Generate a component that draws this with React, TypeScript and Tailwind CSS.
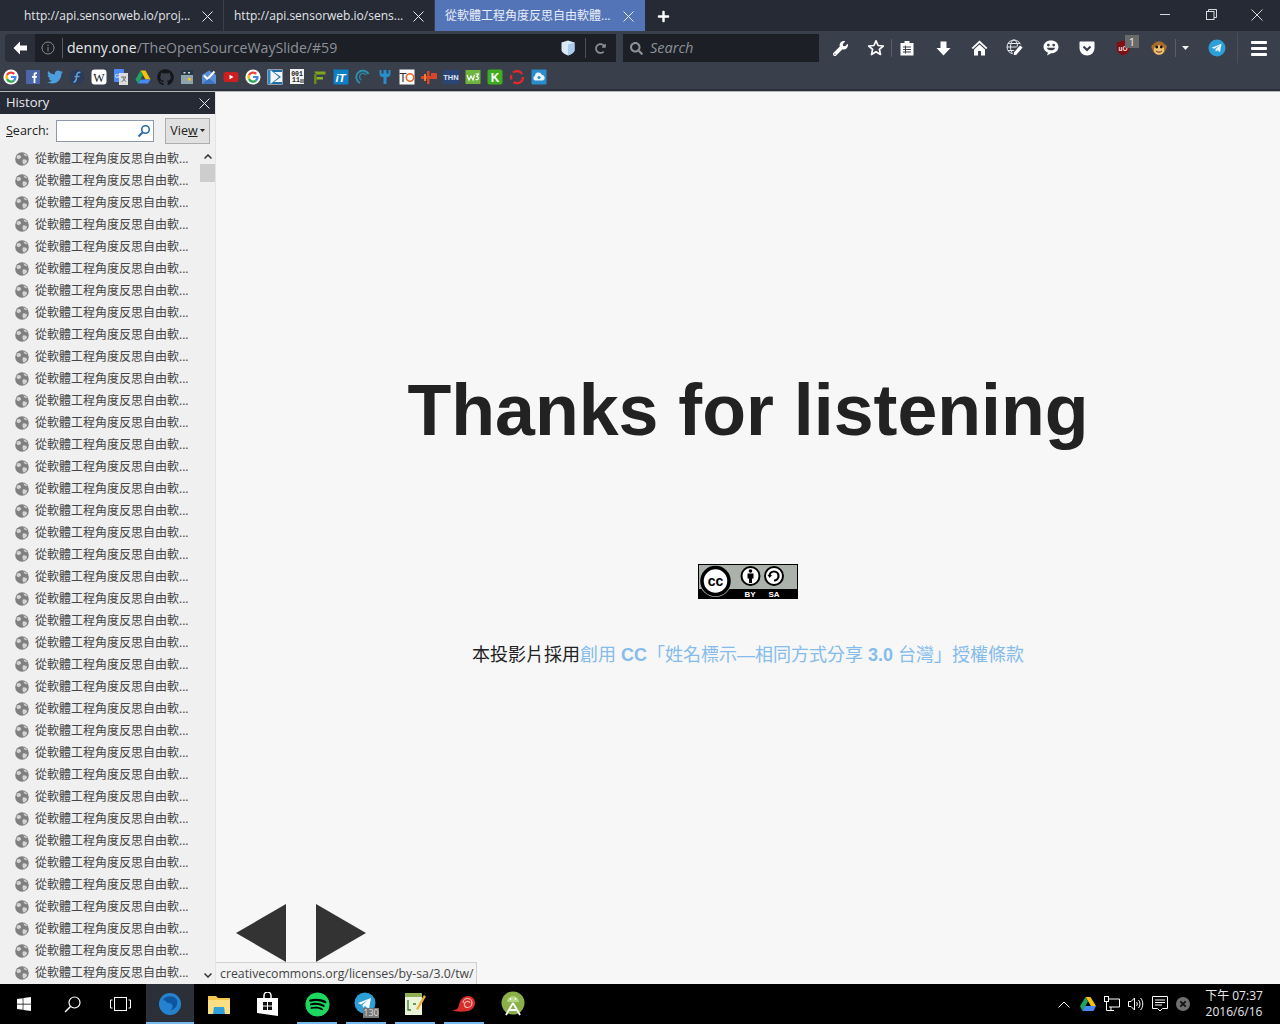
import type { ReactNode } from "react"
import {
  FaGithub,
  FaPlus,
  FaSearch,
  FaTwitter,
  FaWrench,
  FaRedoAlt,
  FaSpotify,
  FaWindows,
} from "react-icons/fa"

const sans = "font-['Open_Sans','Noto_Sans_CJK_TC',sans-serif]"

function GoogleG({ size = 16 }: { size?: number }) {
  return (
    <svg width={size} height={size} viewBox="0 0 16 16">
      <circle cx="8" cy="8" r="7.6" fill="#fff" />
      <path d="M3 5.4A5.6 5.6 0 0 1 12 4.1L10.4 5.7A3.4 3.4 0 0 0 5 6.7Z" fill="#ea4335" />
      <path d="M3 5.4L5 6.7A3.4 3.4 0 0 0 5 9.3L3 10.7A5.7 5.7 0 0 1 3 5.4Z" fill="#fbbc05" />
      <path d="M3 10.7L5 9.3A3.4 3.4 0 0 0 10 10.8L12 12.2A5.6 5.6 0 0 1 3 10.7Z" fill="#34a853" />
      <path d="M8 7H13.5C13.8 9 13.2 10.9 12 12.2L10 10.8C10.6 10.3 11 9.7 11.1 9H8Z" fill="#4285f4" />
    </svg>
  )
}

function Fav({ children }: { children: ReactNode }) {
  return <div className="w-[22px] h-[16px] flex items-center justify-center shrink-0">{children}</div>
}

const s16 = { width: 16, height: 16, viewBox: "0 0 16 16" }

function Bookmarks() {
  return (
    <div className="h-[25px] bg-[#3a3f4c] flex items-center pt-[1px]">
      <Fav><GoogleG /></Fav>
      <Fav><svg {...s16}><rect x="1" y="1" width="14" height="14" fill="#4a66a8" /><path d="M8.6 14V8.8H7V6.900H8.600V5.500C8.600 4 9.500 3.300 10.800 3.300H12V5H11.100C10.600 5 10.400 5.300 10.400 5.800V6.900H12L11.700 8.800H10.400V14Z" fill="#fff" /></svg></Fav>
      <Fav><FaTwitter size={16} color="#4b9fdc" /></Fav>
      <Fav><svg {...s16}><circle cx="8" cy="8" r="7.500" fill="#2d3a58" /><path d="M4.500 13C6.500 13 7 11.500 7.300 10L8 5.500C8.200 4 9 3 11.500 3.200" stroke="#5da3e0" strokeWidth="1.500" fill="none" /><path d="M5.500 7.500H10.500" stroke="#5da3e0" strokeWidth="1.300" /></svg></Fav>
      <Fav><svg {...s16}><rect x="0.500" y="0.500" width="15" height="15" rx="3" fill="#fff" /><text x="8" y="12.500" textAnchor="middle" fontSize="12" fontFamily="Liberation Serif" fill="#111">W</text></svg></Fav>
      <Fav><svg {...s16}><rect x="1" y="0" width="10" height="13" rx="1" fill="#4c8bf5" /><rect x="6" y="4" width="9" height="12" fill="#dcdcdc" /><text x="4" y="9" textAnchor="middle" fontSize="6" fill="#fff" fontFamily="Liberation Sans">G</text><path d="M8 8H13M10 8C10.400 11 12 12 13 12.500M12.500 8C12 11 10 12 8.500 12.500" stroke="#777" strokeWidth="1" fill="none" /></svg></Fav>
      <Fav><svg {...s16}><path d="M5.500 1.500H10.500L15.500 10.500H10.500Z" fill="#f4c20d" /><path d="M5.500 1.500L0.500 10.500L3 14.500L8 5.800Z" fill="#1ea362" /><path d="M3 14.500H13L15.500 10.500H5.500Z" fill="#4688f4" /></svg></Fav>
      <Fav><FaGithub size={17} color="#14161a" /></Fav>
      <Fav><svg {...s16}><rect x="2" y="1" width="12" height="14" fill="#8fa3ad" /><rect x="2" y="1" width="12" height="5" fill="#263846" /><rect x="4.500" y="3" width="2" height="1.500" fill="#cfd8dc" /><rect x="9" y="3" width="2" height="1.500" fill="#cfd8dc" /><rect x="9" y="9" width="3" height="2.500" fill="#f2c230" /></svg></Fav>
      <Fav><svg {...s16}><path d="M1 6L8 1.500L15 6V15H1Z" fill="#5a8fd8" /><path d="M3 6.500L6.500 10L13.500 2.500" stroke="#fff" strokeWidth="2" fill="none" /><path d="M1 15L8 9.500L15 15Z" fill="#3f73bd" /></svg></Fav>
      <Fav><svg {...s16}><rect x="0.500" y="3" width="15" height="10" rx="2.500" fill="#cc1f1f" /><path d="M6.500 5.800L10.500 8L6.500 10.200Z" fill="#fff" /></svg></Fav>
      <Fav><GoogleG /></Fav>
      <Fav><svg {...s16}><rect x="0.500" y="0.500" width="15" height="15" fill="#f4f7fa" /><path d="M1 1V15L3.500 15V1Z" fill="#2c87c8" /><path d="M3.500 1L12 8L3.500 15H15V13L7 13L14 8L7 3H15V1Z" fill="#1c6fa8" /></svg></Fav>
      <Fav><svg {...s16}><rect x="1" y="0" width="14" height="15" fill="#f2f2f2" /><text x="8" y="6.500" textAnchor="middle" fontSize="6.500" fontFamily="Liberation Mono" fontWeight="700" fill="#222">001</text><text x="7" y="13" textAnchor="middle" fontSize="6.500" fontFamily="Liberation Mono" fontWeight="700" fill="#222">11</text><path d="M11 10H15V14H11Z" fill="#888" /></svg></Fav>
      <Fav><svg {...s16}><path d="M3 15V5H5.500V15Z" fill="#6a8a1c" /><path d="M3 2.500H14.500V5.500H5.500Z" fill="#7fa61f" /><path d="M5.500 8H12V10.500H5.500Z" fill="#8cb324" /></svg></Fav>
      <Fav><svg {...s16}><rect x="0.500" y="0.500" width="15" height="15" fill="#0f7fc4" /><text x="7.500" y="12.500" textAnchor="middle" fontSize="11.500" fontFamily="Liberation Sans" fontStyle="italic" fontWeight="700" fill="#fff">iT</text></svg></Fav>
      <Fav><svg {...s16}><path d="M13.500 5A6.500 6.500 0 1 0 5 14" stroke="#2f93b5" strokeWidth="1.800" fill="none" /><path d="M11 6A3.500 3.500 0 1 0 6.500 11" stroke="#2f7e9c" strokeWidth="1.500" fill="none" /></svg></Fav>
      <Fav><svg {...s16}><path d="M2.500 1V5C2.500 7 4 8 6.500 8.300V15H9.500V8.300C12 8 13.500 7 13.500 5V1H11.500V4.500H9.500V1H6.500V4.500H4.500V1Z" fill="#2a8cc9" /></svg></Fav>
      <Fav><svg {...s16}><rect x="0.500" y="0.500" width="15" height="15" fill="#fbfbfb" /><text x="4" y="12.500" textAnchor="middle" fontSize="12" fontFamily="Liberation Sans" fill="#333">T</text><circle cx="11" cy="8.500" r="3.700" stroke="#e8672d" strokeWidth="1.600" fill="none" /></svg></Fav>
      <Fav><svg {...s16}><rect x="0" y="7" width="16" height="3" fill="#d9472b" /><rect x="6" y="2" width="2.500" height="13" fill="#d9472b" /><rect x="3" y="5" width="2" height="7" fill="#f08030" /><path d="M10 4H14A2.500 2.500 0 0 1 14 9H10Z" fill="#d9472b" /></svg></Fav>
      <Fav><svg {...s16}><rect x="0" y="1" width="16" height="14" fill="#2a4577" /><text x="8" y="11" textAnchor="middle" fontSize="7.500" fontFamily="Liberation Sans" fontWeight="700" fill="#dfe7f5">THN</text></svg></Fav>
      <Fav><svg {...s16}><rect x="0.500" y="1" width="15" height="14" fill="#6fb43f" /><path d="M2 6L4 11L6 7L8 11L9.500 6M10.500 5H13.500L11.800 7.500C14 7.500 14 11.500 10.500 10.500" stroke="#fff" strokeWidth="1.200" fill="none" /></svg></Fav>
      <Fav><svg {...s16}><rect x="0.500" y="0.500" width="15" height="15" rx="2" fill="#3fad1f" /><text x="8" y="12.500" textAnchor="middle" fontSize="12" fontFamily="Liberation Sans" fontWeight="700" fill="#fff">K</text></svg></Fav>
      <Fav><svg {...s16}><path d="M4 3.500A6 6 0 0 1 13 5M14 8A6 6 0 0 1 4.500 13M2.500 10.500A6 6 0 0 1 2.500 6" stroke="#e3292e" strokeWidth="2.200" fill="none" /></svg></Fav>
      <Fav><svg {...s16}><rect x="0.500" y="0.500" width="15" height="15" rx="1" fill="#2a8ccb" /><path d="M4 11.500A2.500 2.500 0 0 1 4 6.800A3.500 3.500 0 0 1 10.800 5.800A3 3 0 0 1 12 11.500Z" fill="#e8f3fb" /><circle cx="8" cy="8.500" r="1.500" fill="#2a8ccb" /></svg></Fav>
    </div>
  )
}

function Tab({ title, active, width }: { title: string; active?: boolean; width: string }) {
  return (
    <div
      className={`${width} h-full flex items-center pl-[10px] shrink-0 ${
        active ? "bg-[#5474b8]" : "border-r border-[#3a3f4c]"
      }`}
    >
      <span className={`flex-1 text-[12px] pt-[1px] whitespace-nowrap ${active ? "text-[#e8ecf6]" : "text-[#e2e4e8]"}`}>
        {title}
      </span>
      <svg width="11" height="11" viewBox="0 0 11 11" className={`mt-[1px] ${active ? "mr-[11px]" : "mr-[10px]"}`}>
        <path d="M0.500 0.500L10.500 10.500M10.500 0.500L0.500 10.500" stroke="#e8eaee" strokeWidth="1" />
      </svg>
    </div>
  )
}

function TabBar() {
  return (
    <div className="h-[31px] bg-[#252a35] flex items-center">
      <div className="w-[14px] h-full" />
      <Tab title="http://api.sensorweb.io/proj..." width="w-[210px]" />
      <Tab title="http://api.sensorweb.io/sens..." width="w-[211px]" />
      <Tab title="從軟體工程角度反思自由軟體..." width="w-[210px]" active />
      <div className="w-[36px] flex justify-center mt-[1px]">
        <FaPlus size={13} color="#fff" />
      </div>
      <div className="flex-1" />
      <div className="w-[46px] flex justify-center -mt-[2px]">
        <div className="w-[10px] h-px bg-[#d8dade]" />
      </div>
      <div className="w-[46px] flex justify-center -mt-[2px]">
        <svg width="11" height="11" viewBox="0 0 11 11" fill="none" stroke="#d8dade">
          <rect x="0.500" y="2.500" width="7.500" height="8" />
          <path d="M2.500 2.500V0.500H10.500V8.500H8" />
        </svg>
      </div>
      <div className="w-[46px] flex justify-center -mt-[2px]">
        <svg width="12" height="12" viewBox="0 0 12 12">
          <path d="M0.500 0.500L11.500 11.500M11.500 0.500L0.500 11.500" stroke="#d8dade" />
        </svg>
      </div>
    </div>
  )
}

function Tool({ w = "w-[36px]", children }: { w?: string; children: ReactNode }) {
  return <div className={`${w} h-full flex items-center justify-center relative shrink-0`}>{children}</div>
}

function NavBar() {
  return (
    <div className="h-[33px] bg-[#3a3f4c] flex items-center pl-[5px] pt-[1px]">
      <div className="flex h-[28px] w-[611px] shrink-0">
        <div className="w-[30px] h-full bg-[#2b2f39] rounded-l-sm flex items-center justify-center">
          <svg width="14" height="14" viewBox="0 0 14 14">
            <path d="M7 0.500V4.500H14V9.500H7V13.500L0.500 7Z" fill="#fff" />
          </svg>
        </div>
        <div className="flex-1 bg-[#1c1f26] flex items-center">
          <svg width="14" height="14" viewBox="0 0 14 14" className="ml-[6px]" fill="none" stroke="#8a8d94">
            <circle cx="7" cy="7" r="6" />
            <path d="M7 6V10.500M7 3.500V5" />
          </svg>
          <div className="w-px h-[20px] bg-[#5a5d66] ml-[7px]" />
          <span className="ml-[4px] text-[14.100px] text-[#e6e7ea] leading-none">
            denny.one<span className="text-[#8e9199]">/TheOpenSourceWaySlide/#59</span>
          </span>
          <div className="flex-1" />
          <svg width="14" height="16" viewBox="0 0 14 16">
            <path d="M7 0.500L13.500 2.500V10C13.500 12.500 10 14.500 7 15.500C4 14.500 0.500 12.500 0.500 10V2.500Z" fill="#dbe9f7" />
            <path d="M7 4.500L13.500 2.500V10C13.500 12.500 10 14.500 7 15.500Z" fill="#a9cbed" />
          </svg>
          <div className="w-px h-[20px] bg-[#4b4e57] ml-[10px]" />
          <div className="w-[30px] flex justify-center pr-[2px]">
            <FaRedoAlt size={11} color="#8a8d94" />
          </div>
        </div>
      </div>
      <div className="w-[196px] h-[28px] ml-[7px] bg-[#1c1f26] flex items-center pl-[7px] shrink-0">
        <FaSearch size={13} color="#8e9199" />
        <span className="ml-[7px] text-[14.500px] italic text-[#8e9199]">Search</span>
      </div>
      <div className="flex h-full ml-[3px] items-center">
        <Tool><FaWrench size={15} color="#fff" /></Tool>
        <Tool>
          <svg width="18" height="18" viewBox="0 0 18 18">
            <path d="M9 1.800L11.100 6.500L16.300 7L12.400 10.400L13.500 15.500L9 12.800L4.500 15.500L5.600 10.400L1.700 7L6.900 6.500Z" fill="none" stroke="#fff" strokeWidth="1.700" strokeLinejoin="round" />
          </svg>
        </Tool>
        <div className="w-px h-[18px] bg-[#5a5e6b] -ml-[3px]" />
        <Tool w="w-[30px]">
          <svg width="14" height="16" viewBox="0 0 14 16">
            <path d="M0.500 3H4.500V1H9.500V3H13.500V15.500H0.500Z" fill="#fff" />
            <path d="M3 7H11M3 9.500H11M3 12H11M5.500 5.500V13.500" stroke="#3a3f4c" strokeWidth="1" />
          </svg>
        </Tool>
        <Tool w="w-[44px]">
          <svg width="15" height="15" viewBox="0 0 15 15" className="-ml-[2px]">
            <path d="M4.500 0.500H10.500V7H14.500L7.500 14.500L0.500 7H4.500Z" fill="#fff" />
          </svg>
        </Tool>
        <Tool w="w-[26px]">
          <svg width="17" height="16" viewBox="0 0 17 16">
            <path d="M8.500 0.500L16.500 8L15 9L8.500 3L2 9L0.500 8Z" fill="#fff" />
            <path d="M8.500 4.500L14 9.500V15.500H10V11H7V15.500H3V9.500Z" fill="#fff" />
          </svg>
        </Tool>
        <Tool w="w-[46px]">
          <svg width="18" height="18" viewBox="0 0 18 18" fill="none" stroke="#e8e9ec" strokeWidth="1">
            <circle cx="8" cy="8" r="7" />
            <ellipse cx="8" cy="8" rx="3.500" ry="7" />
            <path d="M1 8H15M2 4.500H14M2 11.500H14" />
            <path d="M7 17L7.500 13L14 5.500L17.500 8.500L11 16Z" fill="#fff" stroke="#3a3f4c" strokeWidth="1.200" />
          </svg>
        </Tool>
        <Tool w="w-[26px]">
          <svg width="16" height="16" viewBox="0 0 15 15">
            <path d="M7.500 0.500C11.500 0.500 14.500 3 14.500 6.500C14.500 10 11.500 12.500 7.500 12.500L4 14.500L4.500 11.800C2 10.500 0.500 8.700 0.500 6.500C0.500 3 3.500 0.500 7.500 0.500Z" fill="#fff" />
            <circle cx="5" cy="4.800" r="1.300" fill="#3a3f4c" />
            <circle cx="10" cy="4.800" r="1.300" fill="#3a3f4c" />
            <path d="M3.500 7.200C5 10.500 10 10.500 11.500 7.200Z" fill="#3a3f4c" />
          </svg>
        </Tool>
        <Tool w="w-[46px]">
          <svg width="16" height="15" viewBox="0 0 16 15">
            <path d="M1.500 0.500H14.500C15.200 0.500 15.500 1 15.500 1.500V7C15.500 11.500 12 14.500 8 14.500C4 14.500 0.500 11.500 0.500 7V1.500C0.500 1 0.800 0.500 1.500 0.500Z" fill="#fff" />
            <path d="M4.500 5.500L8 9L11.500 5.500" stroke="#3a3f4c" strokeWidth="2.200" fill="none" />
          </svg>
        </Tool>
        <Tool w="w-[26px]">
          <svg width="14" height="16" viewBox="0 0 14 16">
            <path d="M7 0.500L13.500 2.500V9C13.500 12 10 14.500 7 15.500C4 14.500 0.500 12 0.500 9V2.500Z" fill="#800f16" />
            <text x="7" y="10.500" textAnchor="middle" fontSize="6.500" fontFamily="Liberation Sans" fontWeight="700" fill="#f0e0e0">uO</text>
          </svg>
          <div className="absolute left-[15px] top-[3px] w-[14px] h-[13px] bg-[#6a6a6a] text-[11px] leading-[13px] text-center text-[#eee]">1</div>
        </Tool>
        <Tool w="w-[46px]">
          <svg width="16" height="16" viewBox="0 0 16 16">
            <circle cx="2.500" cy="7" r="2.200" fill="#b9772a" />
            <circle cx="13.500" cy="7" r="2.200" fill="#b9772a" />
            <circle cx="8" cy="8" r="6.800" fill="#a86d28" />
            <ellipse cx="8" cy="10" rx="5.200" ry="4.800" fill="#eec070" />
            <circle cx="5.700" cy="7" r="1.400" fill="#111" />
            <circle cx="10.300" cy="7" r="1.400" fill="#111" />
            <path d="M5 11C6.500 12.500 9.500 12.500 11 11" stroke="#532" fill="none" />
          </svg>
        </Tool>
        <div className="w-px h-[18px] bg-[#5a5e6b] -ml-[7px]" />
        <Tool w="w-[18px]">
          <svg width="7" height="4" viewBox="0 0 7 4"><path d="M0 0H7L3.500 4Z" fill="#f0f0f0" /></svg>
        </Tool>
        <Tool w="w-[46px]">
          <svg width="18" height="18" viewBox="0 0 18 18">
            <circle cx="9" cy="9" r="8.500" fill="#2d9fd8" />
            <path d="M3.500 8.800L13.500 4.800L12 13.300L9.300 11.300L7.800 12.800L7.400 10.300L11.800 6.300L6.200 9.800Z" fill="#e6f4fb" />
          </svg>
        </Tool>
        <div className="w-px h-[30px] bg-[#4b4f5c] -ml-[3px]" />
        <Tool w="w-[42px]">
          <div className="flex flex-col gap-[3px]">
            <div className="w-[16px] h-[3px] bg-white rounded-[1px]" />
            <div className="w-[16px] h-[3px] bg-white rounded-[1px]" />
            <div className="w-[16px] h-[3px] bg-white rounded-[1px]" />
          </div>
        </Tool>
      </div>
    </div>
  )
}

function Globe() {
  return (
    <svg width="14" height="14" viewBox="0 0 14 14" className="shrink-0 -mt-[1px]">
      <circle cx="7" cy="7" r="6.800" fill="#808080" />
      <path d="M2 3.500C4 2.500 5.500 3 6 4.500C6.500 6 5 6.500 4 7C3 7.500 2 6.500 1.500 5.500Z" fill="#d4d4d4" />
      <path d="M8 7.500C10 7 12 8 12 9.500C11.500 11 10 12.500 8.500 12.500C7.500 11 7 9 8 7.500Z" fill="#d4d4d4" />
      <path d="M8.500 1.500C10 1.500 11.500 2.800 12 4C11 4.500 9 4 8.500 1.500Z" fill="#d4d4d4" />
    </svg>
  )
}

const rows = Array.from({ length: 38 }, (_, i) => i)

function HistoryPanel() {
  return (
    <aside className="w-[216px] shrink-0 bg-[#f0f0f0] flex flex-col text-[12.500px] text-[#222] border-r border-[#e4e4e4]">
      <div className="h-[22px] bg-[#252a35] flex items-center justify-between pl-[6px] pr-[5px] text-[#e8e9ec] shrink-0">
        <span className="text-[13px] -mt-[1px]">History</span>
        <svg width="11" height="11" viewBox="0 0 11 11">
          <path d="M0.500 0.500L10.500 10.500M10.500 0.500L0.500 10.500" stroke="#e8eaee" />
        </svg>
      </div>
      <div className="h-[34px] flex items-center pl-[6px] shrink-0">
        <span className="w-[50px]"><span className="underline">S</span>earch:</span>
        <div className="w-[98px] h-[22px] bg-white border border-[#8d99a8] flex items-center justify-end pr-[2px]">
          <svg width="14" height="14" viewBox="0 0 14 14" fill="none">
            <circle cx="8.500" cy="5.500" r="3.800" stroke="#2d6ca2" strokeWidth="1.600" />
            <path d="M5.500 8.500L1.500 12.500" stroke="#2d6ca2" strokeWidth="2.200" />
          </svg>
        </div>
        <div className="w-[45px] h-[26px] ml-[11px] bg-[#e1e1e1] border border-[#adadad] flex items-center justify-center">
          Vie<span className="underline">w</span>
          <svg width="5" height="3" viewBox="0 0 5 3" className="ml-[2px] mb-[1px]"><path d="M0 0H5L2.500 3Z" fill="#222" /></svg>
        </div>
      </div>
      <div className="flex-1 flex min-h-0">
        <ul className="flex-1 overflow-hidden pl-[15px]">
          {rows.map((i) => (
            <li key={i} className="h-[22px] flex items-center gap-[6px]">
              <Globe />
              <span className="text-[12px] text-[#444] whitespace-nowrap">從軟體工程角度反思自由軟...</span>
            </li>
          ))}
        </ul>
        <div className="w-[15px] shrink-0 flex flex-col items-stretch">
          <div className="h-[16px] flex items-center justify-center">
            <svg width="8" height="5" viewBox="0 0 8 5"><path d="M0.500 4.500L4 1L7.500 4.500" stroke="#333" strokeWidth="1.500" fill="none" /></svg>
          </div>
          <div className="h-[18px] bg-[#cdcdcd]" />
          <div className="flex-1" />
          <div className="h-[17px] flex items-center justify-center">
            <svg width="8" height="5" viewBox="0 0 8 5"><path d="M0.500 0.500L4 4L7.500 0.500" stroke="#333" strokeWidth="1.500" fill="none" /></svg>
          </div>
        </div>
      </div>
    </aside>
  )
}

function CcBadge() {
  return (
    <svg width="100" height="35" viewBox="0 0 100 35" className="block">
      <rect width="100" height="35" fill="#000" />
      <rect x="1" y="1" width="98" height="24" fill="#aab2ab" />
      <circle cx="17.500" cy="17" r="16" fill="#aab2ab" />
      <circle cx="17.500" cy="17" r="13.500" fill="#fff" stroke="#000" strokeWidth="3.500" />
      <text x="17.500" y="21.500" textAnchor="middle" fontSize="14" fontFamily="Liberation Sans" fontWeight="700" fill="#000">cc</text>
      <circle cx="52.500" cy="12" r="9" fill="#fff" stroke="#000" strokeWidth="2" />
      <circle cx="52.500" cy="7" r="1.800" fill="#000" />
      <path d="M49.500 9.500H55.500V14.500H54V19H51V14.500H49.500Z" fill="#000" />
      <circle cx="76" cy="12" r="9" fill="#fff" stroke="#000" strokeWidth="2" />
      <path d="M71.500 12A4.500 4.500 0 1 1 76 16.500" stroke="#000" strokeWidth="2.200" fill="none" />
      <path d="M69.500 11H74L71.700 14Z" fill="#000" />
      <text x="52" y="33" textAnchor="middle" fontSize="8" fontFamily="Liberation Sans" fontWeight="700" fill="#fff">BY</text>
      <text x="76" y="33" textAnchor="middle" fontSize="8" fontFamily="Liberation Sans" fontWeight="700" fill="#fff">SA</text>
    </svg>
  )
}

function Slide() {
  return (
    <main className="flex-1 relative bg-[#f7f7f7] overflow-hidden flex flex-col items-center pt-[275px] font-['Liberation_Sans','Noto_Sans_CJK_TC',sans-serif]">
      <h1 className="text-[71.700px] leading-[86px] font-bold text-[#222] whitespace-nowrap">
        Thanks for listening
      </h1>
      <div className="mt-[111px]"><CcBadge /></div>
      <p className="mt-[43px] text-[18px] leading-[27px] text-[#222] whitespace-nowrap">
        本投影片採用
        <span className="text-[#85bcec]">
          創用 <b>CC</b>「姓名標示—相同方式分享 <b>3.0</b> 台灣」授權條款
        </span>
      </p>

      <div className="absolute left-[20px] top-[812px] flex gap-[30px]">
        <div className="w-0 h-0 border-y-[29px] border-y-transparent border-r-[50px] border-r-[#333]" />
        <div className="w-0 h-0 border-y-[29px] border-y-transparent border-l-[50px] border-l-[#333]" />
      </div>
      <div className="absolute left-0 bottom-0 h-[22px] w-[261px] pl-[4px] pt-[1px] bg-[#f3f3f3] border-t border-r border-[#d0d0d0] flex items-center text-[12.300px] text-[#444] whitespace-nowrap font-['Open_Sans',sans-serif]">
        creativecommons.org/licenses/by-sa/3.0/tw/
      </div>
    </main>
  )
}

function TaskItem({ w = "w-[48px]", children, line, active }: { w?: string; children: ReactNode; line?: boolean; active?: boolean }) {
  return (
    <div className={`${w} h-full flex items-center justify-center relative shrink-0 ${active ? "bg-[#2b3038]" : ""}`}>
      {children}
      {line && <div className="absolute bottom-0 left-1/2 -translate-x-1/2 w-[40px] h-[2px] bg-[#76b9ed]" />}
    </div>
  )
}

function Taskbar() {
  return (
    <div className="h-[40px] bg-black flex items-center shrink-0">
      <TaskItem><FaWindows size={16} color="#fff" /></TaskItem>
      <TaskItem>
        <svg width="17" height="17" viewBox="0 0 17 17" fill="none" stroke="#fff">
          <circle cx="10.500" cy="6.500" r="5.500" strokeWidth="1.200" />
          <path d="M6.500 10.500L1 16" strokeWidth="1.500" />
        </svg>
      </TaskItem>
      <TaskItem>
        <svg width="21" height="14" viewBox="0 0 21 14" fill="none" stroke="#fff">
          <rect x="4.500" y="0.500" width="12" height="13" />
          <path d="M2.500 3H0.500V11H2.500M18.500 3H20.500V11H18.500" />
        </svg>
      </TaskItem>
      <div className="w-[2px]" />
      <TaskItem active>
        <svg width="24" height="24" viewBox="0 0 24 24">
          <circle cx="12" cy="12" r="11" fill="#2383cf" />
          <path d="M5 8C8 3 16 3 19 8C20.500 13 17 18 12 18.500C14.500 17 15.500 14 13.500 12C11.500 10.500 8.500 11.500 8 9Z" fill="#0f549e" />
        </svg>
        <div className="absolute bottom-0 inset-x-0 h-[2px] bg-[#76b9ed]" />
      </TaskItem>
      <div className="w-px" />
      <TaskItem>
        <svg width="22" height="19" viewBox="0 0 22 19">
          <path d="M0 1H8L10 3H22V19H0Z" fill="#f4c84e" />
          <path d="M0 5H22V19H0Z" fill="#fbdf82" />
          <path d="M6 12H16L17 19H5Z" fill="#2f9fde" />
        </svg>
      </TaskItem>
      <TaskItem>
        <svg width="21" height="24" viewBox="0 0 21 24">
          <path d="M7 6V3.500A3.500 3.500 0 0 1 14 3.500V6" stroke="#fff" strokeWidth="1.500" fill="none" />
          <path d="M0 6H21V24L0 21Z" fill="#fff" />
          <path d="M6 10H10V13.500H6ZM11 10H15V13.500H11ZM6 14.500H10V18H6ZM11 14.500H15V18H11Z" fill="#111" />
        </svg>
      </TaskItem>
      <div className="w-[2px]" />
      <TaskItem line><FaSpotify size={25} color="#1ed760" className="bg-black rounded-full" /></TaskItem>
      <TaskItem w="w-[50px]" line>
        <svg width="24" height="24" viewBox="0 0 24 24">
          <circle cx="11" cy="11" r="10.500" fill="#2d9fd8" />
          <path d="M4 11L17 6L15 17L11 14L9 16L8.500 13L14 8L7 12.500Z" fill="#fff" />
        </svg>
        <div className="absolute left-[22px] top-[24px] h-[10px] w-[16px] bg-[#777] text-[9px] leading-[10px] text-center text-[#ddd]">130</div>
      </TaskItem>
      <TaskItem line>
        <svg width="22" height="24" viewBox="0 0 22 24">
          <path d="M1 1H18V23H1Z" fill="#e9f3d8" />
          <path d="M1 1H18V5H1Z" fill="#8fb050" />
          <path d="M4 8V18H7M9 12H12" stroke="#3f7a2a" strokeWidth="1.300" fill="none" />
          <path d="M12 17L20 3L22 4.500L14 18Z" fill="#e9b13a" />
        </svg>
      </TaskItem>
      <TaskItem w="w-[50px]" line>
        <svg width="24" height="18" viewBox="0 0 24 18">
          <path d="M0 15C5 15 6 14 7 10C8 4 12 1 16 1C20.500 1 23 4 23 8C23 12 20 15 16 16C10 17 4 17 0 15Z" fill="#d62f2a" />
          <path d="M11 8A4.500 4.500 0 1 1 15.500 12.500A3 3 0 1 1 18 8" stroke="#f3b5ae" strokeWidth="1.200" fill="none" />
        </svg>
      </TaskItem>
      <TaskItem>
        <svg width="24" height="26" viewBox="0 0 24 26">
          <circle cx="12" cy="12" r="11.500" fill="#8bb04a" />
          <path d="M6 11A6 6 0 0 1 18 11Z" fill="#b4d67e" />
          <circle cx="9.500" cy="8" r="1" fill="#fff" />
          <circle cx="14.500" cy="8" r="1" fill="#fff" />
          <path d="M12 12L5 24M12 12L19 24M8 19H16" stroke="#fff" strokeWidth="1.800" fill="none" />
        </svg>
      </TaskItem>
      <div className="flex-1" />
      <div className="w-[24px] flex justify-center">
        <svg width="12" height="7" viewBox="0 0 12 7" fill="none" stroke="#fff"><path d="M0.500 6.500L6 1L11.500 6.500" /></svg>
      </div>
      <div className="w-[24px] flex justify-center">
        <svg width="16" height="14" viewBox="0 0 16 14">
          <path d="M5.500 0H10.500L16 9H11Z" fill="#f4c20d" />
          <path d="M5.500 0L0 9L2.500 14L8 4.500Z" fill="#1ea362" />
          <path d="M2.500 14H13.500L16 9H5Z" fill="#4688f4" />
        </svg>
      </div>
      <div className="w-[24px] flex justify-center">
        <svg width="16" height="16" viewBox="0 0 16 16" fill="none" stroke="#fff">
          <rect x="0.500" y="0.500" width="4" height="5" />
          <path d="M4.500 3H15.500V11H5M7 14.500V11M2.500 5.500V14.500H10" />
        </svg>
      </div>
      <div className="w-[24px] flex justify-center">
        <svg width="16" height="14" viewBox="0 0 16 14" fill="none" stroke="#fff">
          <path d="M0.500 4.500H3L6.500 1V13L3 9.500H0.500Z" />
          <path d="M8.500 5C9.500 6 9.500 8 8.500 9M10.500 3C12.500 5 12.500 9 10.500 11M12.500 1C15.500 4 15.500 10 12.500 13" />
        </svg>
      </div>
      <div className="w-[24px] flex justify-center">
        <svg width="16" height="16" viewBox="0 0 16 16" fill="none" stroke="#fff">
          <path d="M0.500 0.500H15.500V12.500H10.500L8 15L5.500 12.500H0.500Z" />
          <path d="M3 4H13M3 6.500H13M3 9H10" />
        </svg>
      </div>
      <div className="w-[22px] flex justify-center">
        <svg width="14" height="14" viewBox="0 0 14 14">
          <circle cx="7" cy="7" r="7" fill="#6f6f6f" />
          <path d="M4.300 4.300L9.700 9.700M9.700 4.300L4.300 9.700" stroke="#111" strokeWidth="1.800" />
        </svg>
      </div>
      <div className="w-[80px] mr-[6px] flex flex-col items-center text-[12px] leading-[16px] text-[#e8e8e8] -mt-[1px]">
        <span>下午 07:37</span>
        <span>2016/6/16</span>
      </div>
    </div>
  )
}

export default function App() {
  return (
    <div className={`w-[1280px] h-[1024px] flex flex-col overflow-hidden ${sans}`}>
      <TabBar />
      <NavBar />
      <Bookmarks />
      <div className="h-[3px] bg-[#2c303a] border-b border-[#b4b5b9] shrink-0" />
      <div className="flex-1 flex min-h-0">
        <HistoryPanel />
        <Slide />
      </div>
      <Taskbar />
    </div>
  )
}
